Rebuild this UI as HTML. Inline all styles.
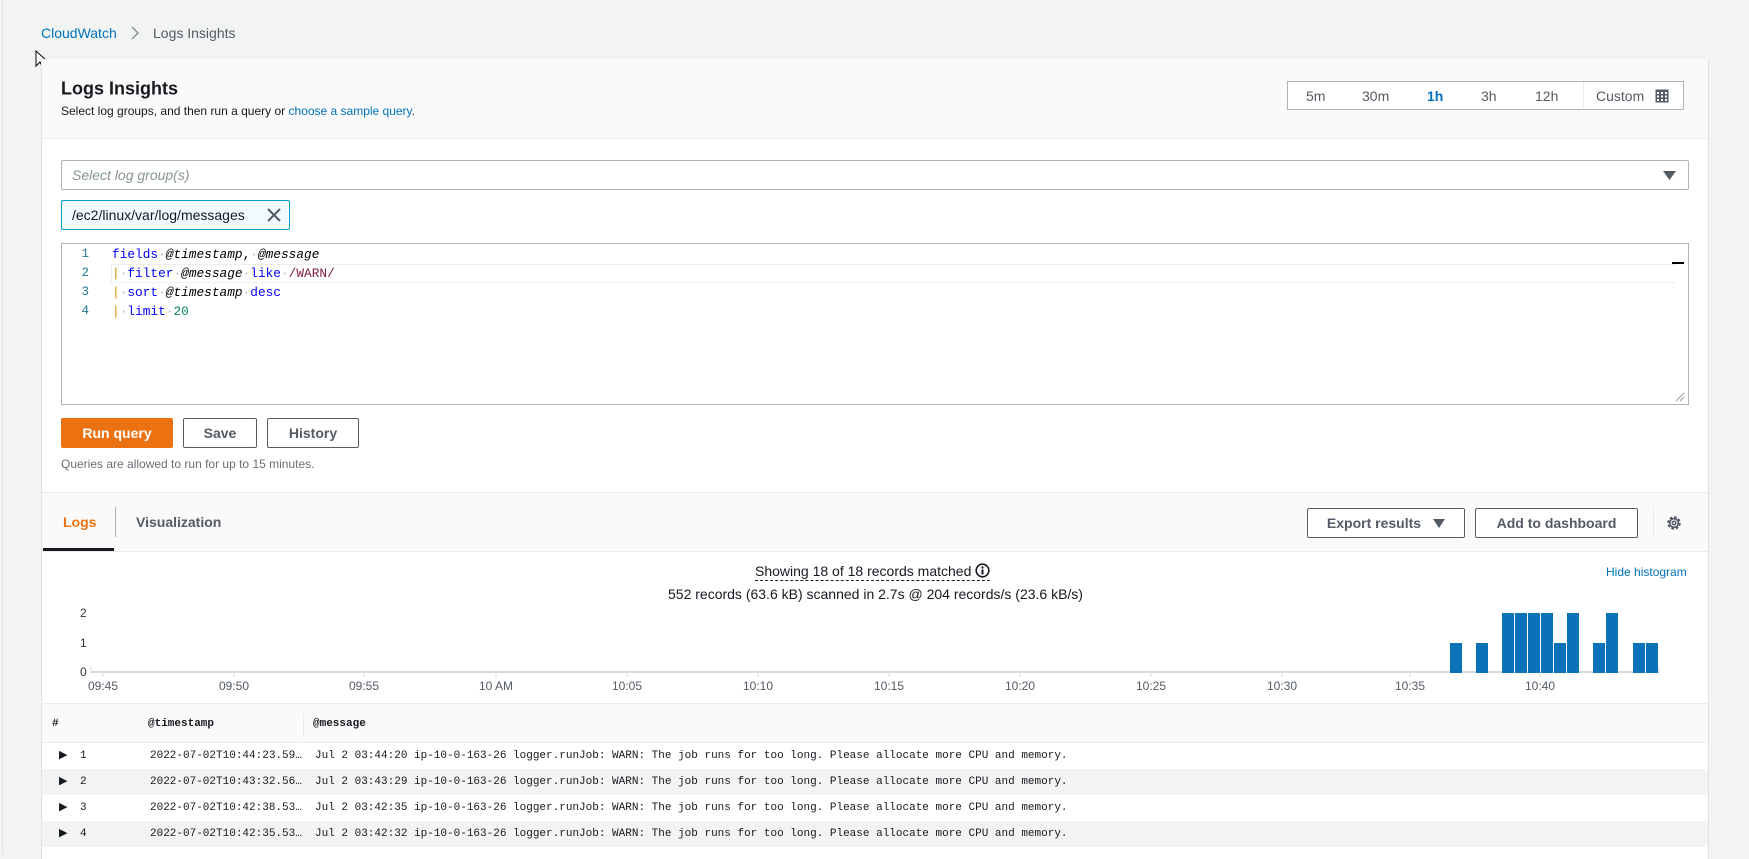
<!DOCTYPE html>
<html><head><meta charset="utf-8"><style>
*{box-sizing:border-box;margin:0;padding:0}
body{width:1749px;height:854px;overflow:hidden;background:#f2f3f3;font-family:"Liberation Sans",sans-serif;color:#16191f;position:relative}
.a{position:absolute}
.mono{font-family:"Liberation Mono",monospace}
.btn{position:absolute;border:1px solid #545b64;border-radius:2px;background:#fff;font-weight:bold;font-size:14px;color:#545b64;display:flex;align-items:center;justify-content:center}
.t{position:absolute;transform:translateY(-50%);white-space:nowrap}
.code div{white-space:nowrap;height:19px}
.row{position:relative;height:26px}
.row span{white-space:nowrap}
</style></head><body>
<div class="a" style="left:2px;top:0;width:1px;height:854px;background:#e1e4e4"></div>
<div class="t" style="left:41px;top:33px;font-size:14px;color:#0073bb">CloudWatch</div>
<svg class="a" style="left:130px;top:26px" width="10" height="14"><path d="M2 1l6 6-6 6" stroke="#879596" stroke-width="1.5" fill="none"/></svg>
<div class="t" style="left:153px;top:33px;font-size:14px;color:#545b64">Logs Insights</div>
<svg class="a" style="left:35px;top:50px" width="12" height="20"><path d="M1 1v15l4-4 3 6 2-1-3-6h5z" fill="#fff" stroke="#000" stroke-width="1"/></svg>

<div class="a" style="left:41px;top:59px;width:1668px;height:800px;background:#fff;border-left:1px solid #e1e4e4;border-right:1px solid #e1e4e4"></div>
<div class="a" style="left:42px;top:59px;width:1666px;height:80px;background:#fafafa;border-bottom:1px solid #eaeded"></div>
<div class="t" style="left:61px;top:89px;font-size:18px;font-weight:bold">Logs Insights</div>
<div class="t" style="left:61px;top:111px;font-size:12px">Select log groups, and then run a query or <span style="color:#0073bb">choose a sample query</span>.</div>

<div class="a" style="left:1287px;top:81px;width:397px;height:29px;border:1px solid #aab7b8;background:#fff"></div>
<div class="t" style="left:1306px;top:96px;font-size:14px;color:#545b64">5m</div>
<div class="t" style="left:1362px;top:96px;font-size:14px;color:#545b64">30m</div>
<div class="t" style="left:1427px;top:96px;font-size:14px;color:#0073bb;font-weight:bold">1h</div>
<div class="t" style="left:1481px;top:96px;font-size:14px;color:#545b64">3h</div>
<div class="t" style="left:1535px;top:96px;font-size:14px;color:#545b64">12h</div>
<div class="a" style="left:1583px;top:82px;width:1px;height:27px;background:#eaeded"></div>
<div class="t" style="left:1596px;top:96px;font-size:14px;color:#545b64">Custom</div>
<svg class="a" style="left:1655px;top:89px" width="14" height="14"><rect x="0.5" y="0.5" width="13" height="13" fill="#545b64"/><g fill="#fff"><rect x="2" y="3" width="2" height="2"/><rect x="6" y="3" width="2" height="2"/><rect x="10" y="3" width="2" height="2"/><rect x="2" y="6.5" width="2" height="2"/><rect x="6" y="6.5" width="2" height="2"/><rect x="10" y="6.5" width="2" height="2"/><rect x="2" y="10" width="2" height="2"/><rect x="6" y="10" width="2" height="2"/><rect x="10" y="10" width="2" height="2"/></g></svg>

<div class="a" style="left:61px;top:160px;width:1628px;height:30px;border:1px solid #aab7b8;border-radius:2px;background:#fff"></div>
<div class="t" style="left:72px;top:175px;font-size:14px;font-style:italic;color:#879596">Select log group(s)</div>
<svg class="a" style="left:1663px;top:171px" width="13" height="9"><path d="M0 0h13l-6.5 9z" fill="#545b64"/></svg>
<div class="a" style="left:61px;top:200px;width:229px;height:30px;border:1px solid #00a1c9;border-radius:2px;background:#f1faff"></div>
<div class="t" style="left:72px;top:215px;font-size:14px">/ec2/linux/var/log/messages</div>
<svg class="a" style="left:267px;top:208px" width="14" height="14"><path d="M1 1l12 12M13 1L1 13" stroke="#545b64" stroke-width="2"/></svg>

<div class="a" style="left:61px;top:243px;width:1628px;height:162px;border:1px solid #aab7b8;background:#fffffd"></div>
<div class="a" style="left:111px;top:264px;width:1565px;height:19px;border:1px solid #eee;border-right:none"></div>
<div class="a" style="left:1672px;top:262px;width:12px;height:2px;background:#000"></div>
<svg class="a" style="left:1675px;top:392px" width="10" height="10"><path d="M9 1L1 9M9 5L5 9" stroke="#999"/></svg>
<div class="mono code" style="position:absolute;left:72px;top:245px;font-size:12.5px;line-height:19px;color:#237893"><div style="width:17px;text-align:right">1</div><div style="width:17px;text-align:right">2</div><div style="width:17px;text-align:right">3</div><div style="width:17px;text-align:right">4</div></div>
<div class="mono code" style="position:absolute;left:112px;top:245px;font-size:12.8px;line-height:19px;color:#000"><div><span style="color:#0000ff">fields</span><span style="color:#bbb">·</span><i>@timestamp</i>,<span style="color:#bbb">·</span><i>@message</i></div><div><span style="color:#d68c00">|</span><span style="color:#bbb">·</span><span style="color:#0000ff">filter</span><span style="color:#bbb">·</span><i>@message</i><span style="color:#bbb">·</span><span style="color:#0000ff">like</span><span style="color:#bbb">·</span><span style="color:#811f3f">/WARN/</span></div><div><span style="color:#d68c00">|</span><span style="color:#bbb">·</span><span style="color:#0000ff">sort</span><span style="color:#bbb">·</span><i>@timestamp</i><span style="color:#bbb">·</span><span style="color:#0000ff">desc</span></div><div><span style="color:#d68c00">|</span><span style="color:#bbb">·</span><span style="color:#0000ff">limit</span><span style="color:#bbb">·</span><span style="color:#098658">20</span></div></div>

<div class="btn" style="left:61px;top:418px;width:112px;height:30px;background:#ec7211;border-color:#ec7211;color:#fff">Run query</div>
<div class="btn" style="left:183px;top:418px;width:74px;height:30px">Save</div>
<div class="btn" style="left:267px;top:418px;width:92px;height:30px">History</div>
<div class="t" style="left:61px;top:464px;font-size:12px;color:#687078">Queries are allowed to run for up to 15 minutes.</div>

<div class="a" style="left:42px;top:492px;width:1666px;height:60px;background:#fafafa;border-top:1px solid #eaeded;border-bottom:1px solid #eaeded"></div>
<div class="t" style="left:63px;top:522px;font-size:14px;font-weight:bold;color:#ec7211">Logs</div>
<div class="a" style="left:43px;top:548px;width:71px;height:3px;background:#16191f"></div>
<div class="a" style="left:115px;top:507px;width:1px;height:30px;background:#aab7b8"></div>
<div class="t" style="left:136px;top:522px;font-size:14px;font-weight:bold;color:#545b64">Visualization</div>
<div class="btn" style="left:1307px;top:508px;width:158px;height:30px">Export results<svg style="margin-left:12px" width="12" height="9"><path d="M0 0h12l-6 9z" fill="#545b64"/></svg></div>
<div class="btn" style="left:1475px;top:508px;width:163px;height:30px">Add to dashboard</div>
<div class="a" style="left:1653px;top:508px;width:1px;height:30px;background:#eaeded"></div>
<svg class="a" style="left:1666px;top:515px" width="16" height="16" viewBox="0 0 16 16"><circle cx="8" cy="8" r="5.5" fill="none" stroke="#545b64" stroke-width="2.5" stroke-dasharray="2.6 1.7"/><circle cx="8" cy="8" r="4.3" fill="none" stroke="#545b64" stroke-width="1.6"/><circle cx="8" cy="8" r="1.8" fill="none" stroke="#545b64" stroke-width="1.5"/></svg>

<div class="t" style="left:755px;top:572px;font-size:14px;border-bottom:1px dashed #16191f;line-height:17px">Showing 18 of 18 records matched <svg width="15" height="15" style="vertical-align:-2px"><circle cx="7.5" cy="7.5" r="6.3" fill="none" stroke="#16191f" stroke-width="1.6"/><rect x="6.5" y="6.5" width="2" height="5" fill="#16191f"/><rect x="6.5" y="3.5" width="2" height="2" fill="#16191f"/></svg></div>
<div class="t" style="left:668px;top:594px;font-size:14px">552 records (63.6 kB) scanned in 2.7s @ 204 records/s (23.6 kB/s)</div>
<div class="t" style="left:1606px;top:572px;font-size:12px;color:#0073bb">Hide histogram</div>

<div class="t" style="left:80px;top:613px;font-size:12px;color:#333">2</div>
<div class="t" style="left:80px;top:643px;font-size:12px;color:#333">1</div>
<div class="t" style="left:80px;top:672px;font-size:12px;color:#333">0</div>
<div class="a" style="left:91px;top:671px;width:1568px;height:2px;background:#d5dbdb"></div>
<svg class="a" style="left:0;top:600px" width="1749" height="100">
<g fill="#0972b9">
<rect x="1450" y="43" width="12" height="30"/><rect x="1476" y="43" width="12" height="30"/>
<rect x="1502" y="13" width="12" height="60"/><rect x="1515" y="13" width="12" height="60"/><rect x="1528" y="13" width="12" height="60"/><rect x="1541" y="13" width="12" height="60"/><rect x="1554" y="43" width="12" height="30"/><rect x="1567" y="13" width="12" height="60"/>
<rect x="1593" y="43" width="12" height="30"/><rect x="1606" y="13" width="12" height="60"/>
<rect x="1633" y="43" width="12" height="30"/><rect x="1646" y="43" width="12" height="30"/></g>
<g stroke="#d5dbdb"><path d="M91 66v8M1659 66v8M103 73v4M234 73v4M364 73v4M496 73v4M627 73v4M758 73v4M889 73v4M1020 73v4M1151 73v4M1282 73v4M1410 73v4M1540 73v4"/></g>
<g font-family="Liberation Sans" font-size="12" fill="#545b64" text-anchor="middle">
<text x="103" y="90">09:45</text><text x="234" y="90">09:50</text><text x="364" y="90">09:55</text><text x="496" y="90">10 AM</text><text x="627" y="90">10:05</text><text x="758" y="90">10:10</text><text x="889" y="90">10:15</text><text x="1020" y="90">10:20</text><text x="1151" y="90">10:25</text><text x="1282" y="90">10:30</text><text x="1410" y="90">10:35</text><text x="1540" y="90">10:40</text></g></svg>

<div class="a" style="left:42px;top:703px;width:1666px;height:40px;background:#fafafa;border-top:1px solid #eaeded;border-bottom:1px solid #eaeded"></div>
<div class="a" style="left:303px;top:714px;width:1px;height:24px;background:#eaeded"></div>
<div class="t mono" style="left:52px;top:724px;font-size:11px;font-weight:bold">#</div>
<div class="t mono" style="left:148px;top:724px;font-size:11px;font-weight:bold">@timestamp</div>
<div class="t mono" style="left:313px;top:724px;font-size:11px;font-weight:bold">@message</div>
<div class="a" style="left:42px;top:769px;width:1666px;height:26px;background:#f2f3f3"></div>
<div class="a" style="left:42px;top:821px;width:1666px;height:26px;background:#f2f3f3"></div>
<div class="mono" style="position:absolute;left:0;top:743px;width:1749px;font-size:11px;line-height:26px"><div class="row"><span class="a" style="left:59px">▶</span><span class="a" style="left:80px">1</span><span class="a" style="left:150px">2022-07-02T10:44:23.59…</span><span class="a" style="left:315px">Jul 2 03:44:20 ip-10-0-163-26 logger.runJob: WARN: The job runs for too long. Please allocate more CPU and memory.</span></div><div class="row"><span class="a" style="left:59px">▶</span><span class="a" style="left:80px">2</span><span class="a" style="left:150px">2022-07-02T10:43:32.56…</span><span class="a" style="left:315px">Jul 2 03:43:29 ip-10-0-163-26 logger.runJob: WARN: The job runs for too long. Please allocate more CPU and memory.</span></div><div class="row"><span class="a" style="left:59px">▶</span><span class="a" style="left:80px">3</span><span class="a" style="left:150px">2022-07-02T10:42:38.53…</span><span class="a" style="left:315px">Jul 2 03:42:35 ip-10-0-163-26 logger.runJob: WARN: The job runs for too long. Please allocate more CPU and memory.</span></div><div class="row"><span class="a" style="left:59px">▶</span><span class="a" style="left:80px">4</span><span class="a" style="left:150px">2022-07-02T10:42:35.53…</span><span class="a" style="left:315px">Jul 2 03:42:32 ip-10-0-163-26 logger.runJob: WARN: The job runs for too long. Please allocate more CPU and memory.</span></div></div>
</body></html>
